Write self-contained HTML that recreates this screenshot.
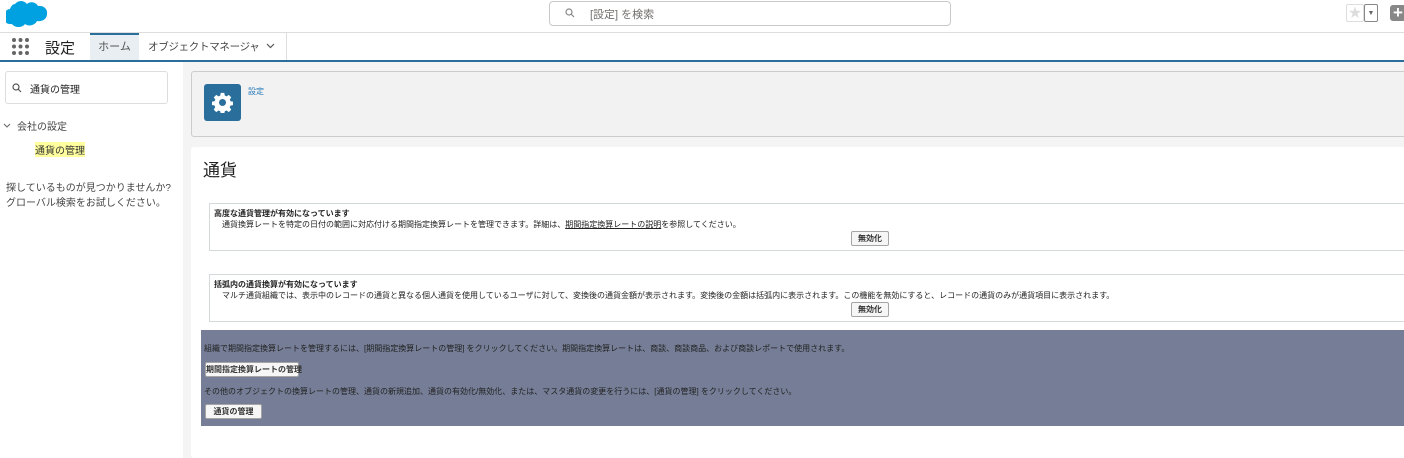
<!DOCTYPE html>
<html><head><meta charset="utf-8">
<style>
*{box-sizing:border-box;margin:0;padding:0}
body{width:1404px;height:458px;overflow:hidden;background:#fff;font-family:"Liberation Sans","Noto Sans CJK JP",sans-serif;color:#333;position:relative}
.abs{position:absolute}
.btn{position:absolute;background:#f6f6f6;border:1px solid #a5a5a5;border-radius:2px;font-size:8px;font-weight:bold;color:#333;text-align:center;line-height:13px;height:15px;white-space:nowrap}
.box{position:absolute;left:209px;width:1200px;border:1px solid #d4dadc;background:#fff}
.s{font-size:8px;color:#222;white-space:nowrap}
</style></head><body>
<svg class="abs" style="left:6px;top:0" width="44" height="28" viewBox="0 0 44 28"><path d="M9 4c3-4 9-4 12 0 3-3 9-2 11 2 5-1 10 3 9 8 0 5-5 8-10 7-2 4-8 6-12 3-3 4-10 4-13 0-5 1-9-3-8-8 0-4 3-7 6-7 1-3 3-5 5-5z" fill="#00a1e0"/></svg>
<div class="abs" style="left:549px;top:1px;width:402px;height:25px;border:1px solid #c9c9c9;border-radius:4px"></div>
<svg class="abs" style="left:565px;top:8px" width="10" height="10"><circle cx="4" cy="4" r="3" fill="none" stroke="#888" stroke-width="1.2"/><path d="M6 6l3 3" stroke="#888" stroke-width="1.2"/></svg>
<div class="abs" style="left:590px;top:6px;font-size:11px;color:#706e6b">[設定] を検索</div>
<div class="abs" style="left:1346px;top:4px;width:18px;height:18px;border:1px solid #ddd;border-radius:2px;color:#ddd;font-size:13px;line-height:16px;text-align:center">★</div>
<div class="abs" style="left:1364px;top:4px;width:14px;height:18px;border:1px solid #888;border-radius:2px;font-size:7px;color:#666;text-align:center;line-height:17px">▼</div>
<div class="abs" style="left:1390px;top:5px;width:16px;height:16px;background:#888;border-radius:3px;color:#fff;font-size:17px;font-weight:bold;line-height:15px;text-align:center">+</div>
<div class="abs" style="left:0;top:32px;width:1404px;height:1px;background:#ddd"></div>
<svg class="abs" style="left:12px;top:38px" width="17" height="17"><g fill="#666"><circle cx="2" cy="2" r="2"/><circle cx="8.5" cy="2" r="2"/><circle cx="15" cy="2" r="2"/><circle cx="2" cy="8.5" r="2"/><circle cx="8.5" cy="8.5" r="2"/><circle cx="15" cy="8.5" r="2"/><circle cx="2" cy="15" r="2"/><circle cx="8.5" cy="15" r="2"/><circle cx="15" cy="15" r="2"/></g></svg>
<div class="abs" style="left:45px;top:37px;font-size:15px;color:#222">設定</div>
<div class="abs" style="left:90px;top:33px;width:49px;height:27px;background:#e8eef2;border-top:2px solid #2a6e9b;font-size:11px;color:#555;text-align:center;line-height:24px">ホーム</div>
<div class="abs" style="left:148px;top:39px;font-size:10.5px;color:#444;white-space:nowrap;letter-spacing:-0.3px">オブジェクトマネージャ</div>
<svg class="abs" style="left:266px;top:43px" width="9" height="6"><path d="M1 1l3.5 3.5L8 1" fill="none" stroke="#555" stroke-width="1.2"/></svg>
<div class="abs" style="left:286px;top:33px;width:1px;height:27px;background:#ddd"></div>
<div class="abs" style="left:0;top:60px;width:1404px;height:2px;background:#2a6e9b"></div>
<div class="abs" style="left:183px;top:62px;width:1221px;height:396px;background:#f4f4f4"></div>
<div class="abs" style="left:5px;top:71px;width:163px;height:33px;border:1px solid #ddd;border-radius:3px"></div>
<svg class="abs" style="left:12px;top:83px" width="10" height="10"><circle cx="4" cy="4" r="3" fill="none" stroke="#555" stroke-width="1.2"/><path d="M6 6l3 3" stroke="#555" stroke-width="1.2"/></svg>
<div class="abs" style="left:30px;top:81px;font-size:10px;color:#222">通貨の管理</div>
<svg class="abs" style="left:3px;top:123px" width="8" height="5"><path d="M1 1l3 3 3-3" fill="none" stroke="#666" stroke-width="1"/></svg>
<div class="abs" style="left:17px;top:118px;font-size:10px;color:#444">会社の設定</div>
<div class="abs" style="left:35px;top:142px;font-size:10px;color:#333;background:#ffff9e">通貨の管理</div>
<div class="abs" style="left:6px;top:181px;font-size:10px;color:#444;line-height:15px">探しているものが見つかりませんか?<br>グローバル検索をお試しください。</div>
<div class="abs" style="left:191px;top:71px;width:1220px;height:66px;background:#f2f2f2;border:1px solid #ccc;border-radius:3px"></div>
<div class="abs" style="left:204px;top:84px;width:37px;height:37px;background:#2a6e9b;border-radius:3px"></div>
<svg class="abs" style="left:212px;top:92px" width="21" height="21" viewBox="0 0 24 24"><path fill="#fff" d="M10 1h4l.6 3 2 1 2.6-1.7 2.8 2.8L20.3 8.7l1 2 2.7.3v4l-3 .6-.8 2 1.8 2.6-2.8 2.8-2.6-1.8-2 .8-.6 3h-4l-.6-3-2-.8-2.6 1.8-2.8-2.8L3.7 17.3l-.9-2L0 15v-4l3-.5.8-2L2 6.1 4.9 3.3 7.4 5l2-.9z"/><circle cx="12" cy="12" r="4" fill="#2a6e9b"/></svg>
<div class="abs" style="left:248px;top:86px;font-size:8px;color:#2a7ab8">設定</div>
<div class="abs" style="left:191px;top:147px;width:1220px;height:311px;background:#fff;border-radius:3px"></div>
<div class="abs" style="left:203px;top:156px;font-size:17px;color:#222">通貨</div>
<div class="box" style="top:203px;height:48px"></div>
<div class="abs s" style="left:214px;top:208px;font-weight:bold">高度な通貨管理が有効になっています</div>
<div class="abs s" style="left:222px;top:219px">通貨換算レートを特定の日付の範囲に対応付ける期間指定換算レートを管理できます。詳細は、<u>期間指定換算レートの説明</u>を参照してください。</div>
<div class="btn" style="left:851px;top:231px;width:38px">無効化</div>
<div class="box" style="top:274px;height:48px"></div>
<div class="abs s" style="left:214px;top:279px;font-weight:bold">括弧内の通貨換算が有効になっています</div>
<div class="abs s" style="left:222px;top:290px">マルチ通貨組織では、表示中のレコードの通貨と異なる個人通貨を使用しているユーザに対して、変換後の通貨金額が表示されます。変換後の金額は括弧内に表示されます。この機能を無効にすると、レコードの通貨のみが通貨項目に表示されます。</div>
<div class="btn" style="left:851px;top:302px;width:38px">無効化</div>
<div class="abs" style="left:201px;top:330px;width:1210px;height:96px;background:#757e96"></div>
<div class="abs s" style="left:204px;top:343px">組織で期間指定換算レートを管理するには、[期間指定換算レートの管理] をクリックしてください。期間指定換算レートは、商談、商談商品、および商談レポートで使用されます。</div>
<div class="btn" style="left:205px;top:362px;width:94px">期間指定換算レートの管理</div>
<div class="abs s" style="left:204px;top:386px">その他のオブジェクトの換算レートの管理、通貨の新規追加、通貨の有効化/無効化、または、マスタ通貨の変更を行うには、[通貨の管理] をクリックしてください。</div>
<div class="btn" style="left:205px;top:404px;width:57px">通貨の管理</div>
</body></html>
